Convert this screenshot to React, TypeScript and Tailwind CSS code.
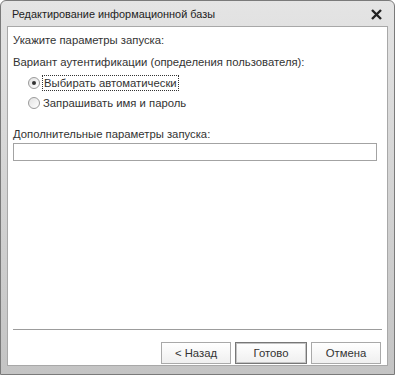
import React from "react";

function Radio({ checked }: { checked?: boolean }) {
  return (
    <span className="relative inline-flex h-[12px] w-[12px] shrink-0 items-center justify-center rounded-full border border-[#9a9a9a] bg-gradient-to-br from-[#e2e2e2] to-white">
      {checked && <span className="h-[4px] w-[4px] rounded-full bg-[#333]" />}
    </span>
  );
}

function Btn({ children, def }: { children: React.ReactNode; def?: boolean }) {
  return (
    <div
      className={`flex h-[22px] items-center justify-center border ${
        def ? "border-[#777] shadow-[inset_0_0_0_1px_#c4c4c4]" : "border-[#a9a9a9]"
      } bg-gradient-to-b from-white to-[#efefef] text-[11.3px] leading-[14px] text-[#333]`}
    >
      {children}
    </div>
  );
}

export default function App() {
  return (
    <div
      className="h-[375px] w-[395px] overflow-hidden bg-white"
      style={{ fontFamily: '"Liberation Sans", Arial, sans-serif' }}
    >
      <div className="flex h-full w-full flex-col rounded-t-[6px] border border-[#7a7a7a] bg-gradient-to-b from-[#e4e4e4] to-[#c4c4c4]">
        <div className="flex h-[25px] shrink-0 items-center justify-between pl-[11px] pr-[12px] pt-[1px]">
          <span className="text-[10.9px] leading-[14px] text-[#222]">Редактирование информационной базы</span>
          <svg width="11" height="11" viewBox="0 0 11 11">
            <path d="M1 1 L10 10 M10 1 L1 10" stroke="#222" strokeWidth="2.4" />
          </svg>
        </div>
        <div className="flex min-h-0 flex-1 px-[6px] pb-[8px]">
          <div className="flex flex-1 flex-col border border-[#a8a8a8] bg-white pl-[5px] pr-[5px] text-[11.3px] leading-[14px] text-[#333]">
            <div className="pt-[6px]">Укажите параметры запуска:</div>
            <div className="pt-[8px]">Вариант аутентификации (определения пользователя):</div>
            <div className="flex items-center gap-[2px] pl-[15px] pt-[6px]">
              <Radio checked />
              <span className="border border-dotted border-[#333] pl-[1px] pr-[1px]">
                Выбирать автоматически
              </span>
            </div>
            <div className="flex items-center gap-[3px] pl-[15px] pt-[4px]">
              <Radio />
              <span className="py-[1px]">Запрашивать имя и пароль</span>
            </div>
            <div className="pt-[16px]">Дополнительные параметры запуска:</div>
            <div className="mt-[2px] mr-[5px] h-[18px] border border-[#a3a3a3] bg-white" />
            <div className="flex-1" />
            <div className="h-px bg-[#9c9c9c]" />
            <div className="flex justify-end gap-[4px] pb-[1px] pt-[12px] pr-[1px]">
              <div className="w-[70px]">
                <Btn>&lt; Назад</Btn>
              </div>
              <div className="w-[72px]">
                <Btn def>Готово</Btn>
              </div>
              <div className="w-[70px]">
                <Btn>Отмена</Btn>
              </div>
            </div>
          </div>
        </div>
      </div>
    </div>
  );
}
